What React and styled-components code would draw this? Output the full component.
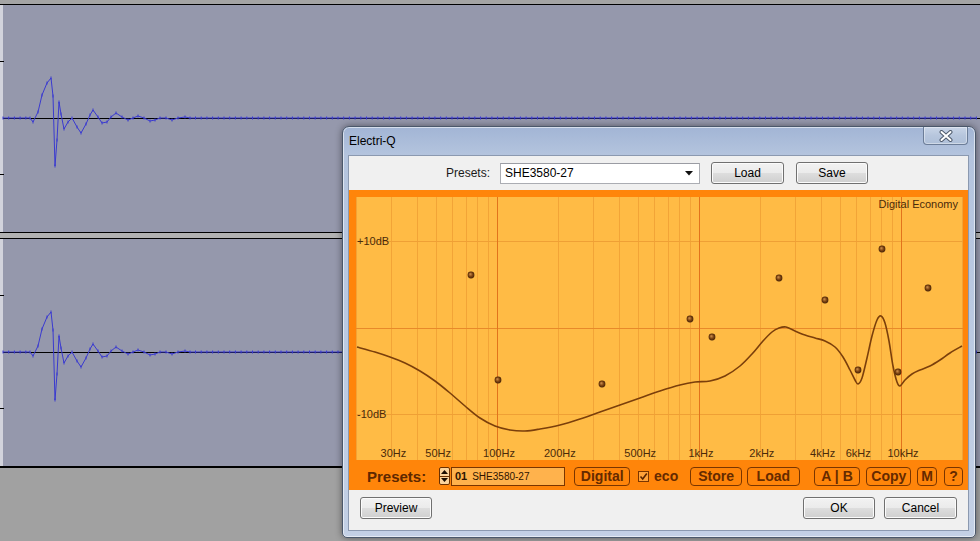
import React from 'react';
import styled, { createGlobalStyle } from 'styled-components';

const GlobalStyle = createGlobalStyle`
  html, body { margin: 0; padding: 0; background: #a1a1a1; }
  body { font-family: "Liberation Sans", Arial, sans-serif; }
  * { box-sizing: border-box; }
`;

const Screen = styled.div`
  position: relative;
  width: 980px;
  height: 541px;
  overflow: hidden;
  background: #a1a1a1;
  display: flex;
  flex-direction: column;
`;

const TopStrip = styled.div`
  flex: none;
  height: 4px;
  background: #a4a4a4;
`;

const Track = styled.div`
  flex: none;
  height: ${p => p.$h}px;
  border-top: 1px solid #000;
  border-bottom: ${p => p.$bottom}px solid #000;
  background: #9598ac;
`;

const TrackGap = styled.div`
  flex: none;
  height: 5px;
  background: #b2b2b2;
`;

const WaveSvg = styled.svg`
  display: block;
  width: 980px;
  height: 227px;
`;

/* ---------- dialog ---------- */
const Dialog = styled.div`
  position: absolute;
  left: 342px;
  top: 126px;
  width: 634px;
  height: 412px;
  border: 1px solid #4b586b;
  border-radius: 7px 7px 5px 5px;
  background: linear-gradient(180deg, #a2b5d5 0%, #b4c4de 7%, #c3d0e5 100%);
  box-shadow: 0 0 7px rgba(0, 0, 0, 0.45), inset 0 0 0 1px rgba(255, 255, 255, 0.55);
  padding: 0 6px 6px 5px;
  display: flex;
  flex-direction: column;
`;

const TitleBar = styled.div`
  flex: none;
  height: 28px;
  display: flex;
  align-items: flex-start;
  justify-content: space-between;
`;

const Title = styled.div`
  font: 12px/14px "Liberation Sans", Arial, sans-serif;
  color: #000;
  padding: 7px 0 0 1px;
`;

const CloseButton = styled.div`
  width: 45px;
  height: 18px;
  margin-right: 1px;
  border: 1px solid #6c7d98;
  border-top: none;
  border-radius: 0 0 4px 4px;
  background: linear-gradient(180deg, #c9d5e7 0%, #b7c6dd 50%, #aebfd8 100%);
  box-shadow: inset 0 0 0 1px rgba(255, 255, 255, 0.4);
  display: flex;
  align-items: center;
  justify-content: center;
`;

const Client = styled.div`
  flex: 1;
  background: #f0f0f0;
  border: 1px solid #8b99b0;
  display: flex;
  flex-direction: column;
`;

const PresetRow = styled.div`
  flex: none;
  height: 34px;
  display: flex;
  align-items: center;
  padding-left: 81px;
`;

const RowLabel = styled.div`
  width: 60px;
  text-align: right;
  font: 12px "Liberation Sans", Arial, sans-serif;
  color: #1a1a1a;
`;

const Combo = styled.div`
  margin-left: 10px;
  width: 200px;
  height: 21px;
  background: #fff;
  border: 1px solid #abadb3;
  border-top-color: #9a9ca3;
  display: flex;
  align-items: center;
  justify-content: space-between;
  padding: 0 6px 0 4px;
  font: 12px "Liberation Sans", Arial, sans-serif;
  color: #000;
`;

const WinButton = styled.div`
  margin-left: ${p => p.$ml || 0}px;
  width: ${p => p.$w}px;
  height: 22px;
  border: 1px solid #707070;
  border-radius: 3px;
  background: linear-gradient(180deg, #f2f2f2 0%, #ebebeb 48%, #dddddd 52%, #cfcfcf 100%);
  box-shadow: inset 0 0 0 1px #fbfbfb;
  display: flex;
  align-items: center;
  justify-content: center;
  font: 12px "Liberation Sans", Arial, sans-serif;
  color: #000;
`;

const OrangePanel = styled.div`
  flex: none;
  height: 300px;
  background: #ff850a;
  padding: 7px 5px 0 7px;
  display: flex;
  flex-direction: column;
`;

const GraphSvg = styled.svg`
  display: block;
  flex: none;
  width: 607px;
  height: 263px;
`;

const ControlBar = styled.div`
  flex: 1;
  display: flex;
  align-items: center;
  padding: 2px 0 0 11px;
`;

const BarLabel = styled.div`
  width: 58px;
  white-space: nowrap;
  font: bold 15px "Liberation Sans", Arial, sans-serif;
  color: #5e2800;
`;

const Spinner = styled.div`
  margin-left: 14px;
  width: 11px;
  height: 18px;
  display: flex;
  flex-direction: column;
  border: 1px solid #6b3000;
  border-radius: 2px;
  background: #fbd39c;
  overflow: hidden;
`;

const SpinHalf = styled.div`
  flex: 1;
  display: flex;
  align-items: center;
  justify-content: center;
  border-top: ${p => (p.$lower ? '1px solid #6b3000' : 'none')};
`;

const PresetField = styled.div`
  margin-left: 1px;
  width: 115px;
  height: 19px;
  background: #ffb24c;
  border: 1px solid #7a3500;
  display: flex;
  align-items: center;
  padding-left: 3px;
  color: #2e1400;
`;

const FieldNum = styled.span`
  font: bold 11px "Liberation Sans", Arial, sans-serif;
  margin-right: 5px;
`;

const FieldName = styled.span`
  font: 10px "Liberation Sans", Arial, sans-serif;
`;

const BarButton = styled.div`
  margin-left: ${p => p.$ml}px;
  width: ${p => p.$w}px;
  height: 19px;
  border: 1px solid #7a3500;
  border-radius: 4px;
  display: flex;
  align-items: center;
  justify-content: center;
  font: bold 14px "Liberation Sans", Arial, sans-serif;
  color: #652a00;
  white-space: nowrap;
`;

const Check = styled.div`
  margin-left: 8px;
  width: 11px;
  height: 11px;
  border: 1px solid #7a3500;
  background: #ffa23a;
  display: flex;
  align-items: center;
  justify-content: center;
`;

const CheckLabel = styled.div`
  margin-left: 5px;
  font: bold 14px "Liberation Sans", Arial, sans-serif;
  color: #652a00;
`;

const Footer = styled.div`
  flex: 1;
  display: flex;
  align-items: flex-start;
  justify-content: space-between;
  padding: 7px 11px 0 11px;
`;

const FooterGroup = styled.div`
  display: flex;
  gap: 9px;
`;

/* ---------- waveform data ---------- */
const WAVE_KEYS = [
  [30, 118], [33, 122], [38, 112], [42, 95], [47, 83], [51, 78], [53, 96], [55, 166],
  [57, 140], [59, 102], [61, 114], [64, 129], [68, 122], [72, 118], [77, 127], [81, 133],
  [86, 124], [90, 115], [93, 110], [98, 117], [102, 123], [107, 122], [111, 117], [116, 113],
  [122, 117], [128, 120], [133, 118], [138, 116], [144, 118], [150, 121], [155, 120],
  [160, 118], [166, 118], [172, 120], [178, 118], [185, 117], [190, 118],
];

function buildSamples() {
  const s = [];
  for (let x = 3; x < 30; x += 5.7) s.push([x, 118]);
  WAVE_KEYS.forEach(p => s.push(p));
  for (let x = 195.5; x <= 980; x += 5.7) s.push([x, 118]);
  return s.map(([x, y]) => [x, y - 5]);
}
const SAMPLES = buildSamples();

function Wave() {
  const line = SAMPLES.map(p => p.join(',')).join(' ');
  return (
    <WaveSvg viewBox="0 0 980 227">
      <rect x="0" y="0" width="3" height="227" fill="#d2d3dc" />
      <line x1="0" x2="4" y1="56.5" y2="56.5" stroke="#000" />
      <line x1="0" x2="4" y1="169.5" y2="169.5" stroke="#000" />
      <line x1="3" x2="980" y1="113.5" y2="113.5" stroke="#000" />
      <polyline points={line} fill="none" stroke="#3a3ad0" strokeWidth="1" />
      {SAMPLES.map(([x, y], i) => (
        <line key={i} x1={x} x2={x} y1={y - 1.5} y2={y + 1.5} stroke="#3a3ad0" strokeWidth="1" />
      ))}
    </WaveSvg>
  );
}

/* ---------- EQ graph ---------- */
const X0 = 356;
const Y0 = 197;
const fx = f => 295 + 202 * Math.log10(f / 10) - X0;
const dby = db => 130.5 - db * 8.65;

const MINOR = [];
[10, 100, 1000].forEach(d => {
  for (let k = 2; k <= 9; k++) MINOR.push(d * k);
});
MINOR.push(20000);
const MAJOR = [100, 1000, 10000];

const LABELS = [
  ['30Hz', 30], ['50Hz', 50], ['100Hz', 100], ['200Hz', 200], ['500Hz', 500],
  ['1kHz', 1000], ['2kHz', 2000], ['4kHz', 4000], ['6kHz', 6000], ['10kHz', 10000],
];

const CURVE = [
  [357, 347], [375, 352], [390, 357], [405, 363], [420, 371], [435, 381], [450, 393],
  [465, 406], [480, 418], [495, 426], [510, 430], [525, 431], [540, 429], [560, 425],
  [580, 419], [600, 412], [620, 405], [640, 398], [660, 391], [680, 385], [695, 382],
  [710, 381], [725, 376], [740, 366], [752, 354], [763, 341], [772, 332], [779, 328],
  [786, 327], [795, 331], [805, 335], [815, 338], [825, 341], [835, 347], [843, 357],
  [850, 370], [855, 380], [858, 384], [862, 378], [867, 358], [872, 336], [877, 320],
  [881, 316], [885, 323], [889, 341], [893, 366], [897, 382], [900, 386], [905, 380],
  [912, 374], [920, 370], [930, 366], [940, 360], [950, 353], [962, 346],
].map(([x, y]) => [x - X0, y - Y0]);

const DOTS = [
  [471, 275], [498, 380], [602, 384], [690, 319], [712, 337], [779, 278],
  [825, 300], [858, 370], [882, 249], [898, 372], [928, 288],
].map(([x, y]) => [x - X0, y - Y0]);

function smoothPath(pts) {
  let d = `M${pts[0][0]},${pts[0][1]}`;
  for (let i = 0; i < pts.length - 1; i++) {
    const p0 = pts[i - 1] || pts[i];
    const p1 = pts[i];
    const p2 = pts[i + 1];
    const p3 = pts[i + 2] || p2;
    const c1 = [p1[0] + (p2[0] - p0[0]) / 6, p1[1] + (p2[1] - p0[1]) / 6];
    const c2 = [p2[0] - (p3[0] - p1[0]) / 6, p2[1] - (p3[1] - p1[1]) / 6];
    d += ` C${c1[0].toFixed(2)},${c1[1].toFixed(2)} ${c2[0].toFixed(2)},${c2[1].toFixed(2)} ${p2[0]},${p2[1]}`;
  }
  return d;
}

function Graph() {
  return (
    <GraphSvg viewBox="0 0 607 263">
      <defs>
        <radialGradient id="ball" cx="50%" cy="50%" fx="38%" fy="35%" r="55%">
          <stop offset="0%" stopColor="#d49550" />
          <stop offset="55%" stopColor="#7c4312" />
          <stop offset="100%" stopColor="#3e1d04" />
        </radialGradient>
      </defs>
      <rect x="0" y="0" width="607" height="263" fill="#ffbb45" />
      {MINOR.map(f => (
        <line key={f} x1={Math.round(fx(f)) + 0.5} x2={Math.round(fx(f)) + 0.5} y1="0" y2="263" stroke="#f2a437" />
      ))}
      <line x1="0" x2="607" y1={Math.round(dby(10)) + 0.5} y2={Math.round(dby(10)) + 0.5} stroke="#efa035" />
      <line x1="0" x2="607" y1={Math.round(dby(-10)) + 0.5} y2={Math.round(dby(-10)) + 0.5} stroke="#efa035" />
      <line x1="0" x2="607" y1={Math.round(dby(0)) + 0.5} y2={Math.round(dby(0)) + 0.5} stroke="#e8892a" />
      {MAJOR.map(f => (
        <line key={f} x1={Math.round(fx(f)) + 0.5} x2={Math.round(fx(f)) + 0.5} y1="0" y2="263" stroke="#e2731c" />
      ))}
      <g fontFamily='"Liberation Sans", Arial, sans-serif' fontSize="11" fill="#4a2a0a">
        <text x="1" y={dby(10) + 4}>+10dB</text>
        <text x="1" y={dby(-10) + 4}>-10dB</text>
        <text x="602" y="11" textAnchor="end">Digital Economy</text>
        {LABELS.map(([t, f]) => (
          <text key={t} x={fx(f) + 2} y="260" textAnchor="middle">{t}</text>
        ))}
      </g>
      <path d={smoothPath(CURVE)} fill="none" stroke="#7b3f0b" strokeWidth="1.6" />
      {DOTS.map(([x, y], i) => (
        <circle key={i} cx={x} cy={y} r="3.4" fill="url(#ball)" />
      ))}
    </GraphSvg>
  );
}

export default function App() {
  return (
    <>
      <GlobalStyle />
      <Screen>
        <TopStrip />
        <Track $h={229} $bottom={1}>
          <Wave />
        </Track>
        <TrackGap />
        <Track $h={230} $bottom={2}>
          <Wave />
        </Track>

        <Dialog>
          <TitleBar>
            <Title>Electri-Q</Title>
            <CloseButton>
              <svg width="14" height="12" viewBox="0 0 14 12">
                <path d="M2.5 2 L11.5 10 M11.5 2 L2.5 10" stroke="#4e5a6c" strokeWidth="4" strokeLinecap="round" />
                <path d="M2.5 2 L11.5 10 M11.5 2 L2.5 10" stroke="#ffffff" strokeWidth="2" strokeLinecap="round" />
              </svg>
            </CloseButton>
          </TitleBar>
          <Client>
            <PresetRow>
              <RowLabel>Presets:</RowLabel>
              <Combo>
                <span>SHE3580-27</span>
                <svg width="8" height="5" viewBox="0 0 8 5">
                  <polygon points="0,0 8,0 4,4.5" fill="#111" />
                </svg>
              </Combo>
              <WinButton $ml={11} $w={73}>Load</WinButton>
              <WinButton $ml={12} $w={72}>Save</WinButton>
            </PresetRow>

            <OrangePanel>
              <Graph />
              <ControlBar>
                <BarLabel>Presets:</BarLabel>
                <Spinner>
                  <SpinHalf>
                    <svg width="7" height="4" viewBox="0 0 7 4"><polygon points="0,4 7,4 3.5,0" fill="#1a0c00" /></svg>
                  </SpinHalf>
                  <SpinHalf $lower>
                    <svg width="7" height="4" viewBox="0 0 7 4"><polygon points="0,0 7,0 3.5,4" fill="#1a0c00" /></svg>
                  </SpinHalf>
                </Spinner>
                <PresetField>
                  <FieldNum>01</FieldNum>
                  <FieldName>SHE3580-27</FieldName>
                </PresetField>
                <BarButton $ml={9} $w={56}>Digital</BarButton>
                <Check>
                  <svg width="9" height="9" viewBox="0 0 9 9">
                    <path d="M1.5 4.5 L3.7 7 L7.8 1.5" fill="none" stroke="#5a2500" strokeWidth="1.6" />
                  </svg>
                </Check>
                <CheckLabel>eco</CheckLabel>
                <BarButton $ml={12} $w={52}>Store</BarButton>
                <BarButton $ml={5} $w={53}>Load</BarButton>
                <BarButton $ml={14} $w={47}>A | B</BarButton>
                <BarButton $ml={6} $w={45}>Copy</BarButton>
                <BarButton $ml={6} $w={20}>M</BarButton>
                <BarButton $ml={7} $w={19}>?</BarButton>
              </ControlBar>
            </OrangePanel>

            <Footer>
              <WinButton $w={72}>Preview</WinButton>
              <FooterGroup>
                <WinButton $w={72}>OK</WinButton>
                <WinButton $w={73}>Cancel</WinButton>
              </FooterGroup>
            </Footer>
          </Client>
        </Dialog>
      </Screen>
    </>
  );
}
